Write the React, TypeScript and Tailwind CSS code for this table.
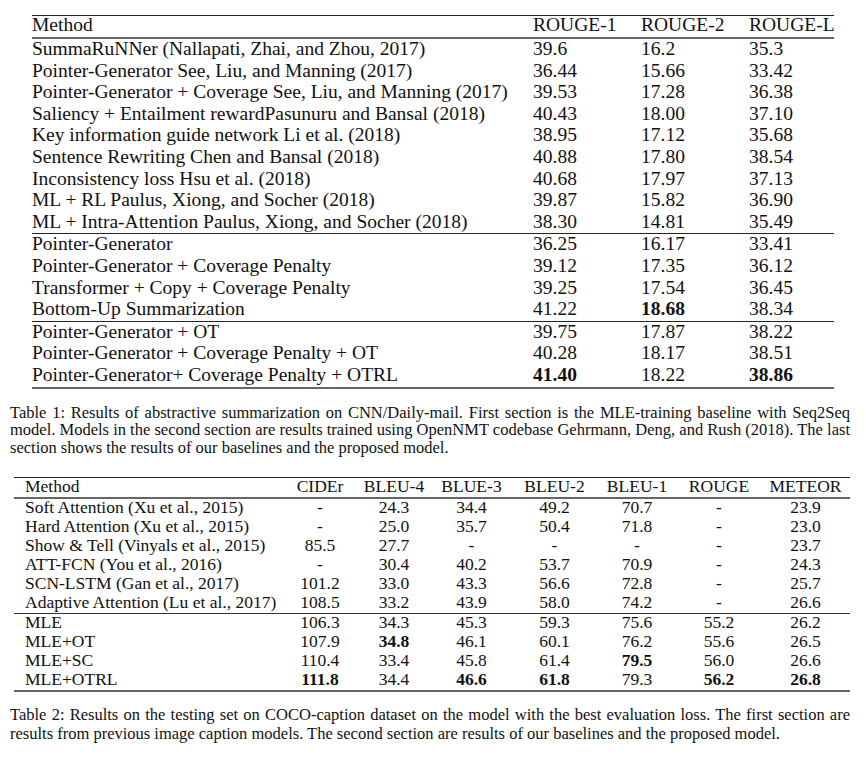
type Row = string[]

const t1Head = ["Method", "ROUGE-1", "ROUGE-2", "ROUGE-L"]

const t1Sections: Row[][] = [
  [
    ["SummaRuNNer (Nallapati, Zhai, and Zhou, 2017)", "39.6", "16.2", "35.3"],
    ["Pointer-Generator See, Liu, and Manning (2017)", "36.44", "15.66", "33.42"],
    ["Pointer-Generator + Coverage See, Liu, and Manning (2017)", "39.53", "17.28", "36.38"],
    ["Saliency + Entailment rewardPasunuru and Bansal (2018)", "40.43", "18.00", "37.10"],
    ["Key information guide network Li et al. (2018)", "38.95", "17.12", "35.68"],
    ["Sentence Rewriting Chen and Bansal (2018)", "40.88", "17.80", "38.54"],
    ["Inconsistency loss Hsu et al. (2018)", "40.68", "17.97", "37.13"],
    ["ML + RL Paulus, Xiong, and Socher (2018)", "39.87", "15.82", "36.90"],
    ["ML + Intra-Attention Paulus, Xiong, and Socher (2018)", "38.30", "14.81", "35.49"],
  ],
  [
    ["Pointer-Generator", "36.25", "16.17", "33.41"],
    ["Pointer-Generator + Coverage Penalty", "39.12", "17.35", "36.12"],
    ["Transformer + Copy + Coverage Penalty", "39.25", "17.54", "36.45"],
    ["Bottom-Up Summarization", "41.22", "*18.68", "38.34"],
  ],
  [
    ["Pointer-Generator + OT", "39.75", "17.87", "38.22"],
    ["Pointer-Generator + Coverage Penalty + OT", "40.28", "18.17", "38.51"],
    ["Pointer-Generator+ Coverage Penalty + OTRL", "*41.40", "18.22", "*38.86"],
  ],
]

const t2Head = ["Method", "CIDEr", "BLEU-4", "BLUE-3", "BLEU-2", "BLEU-1", "ROUGE", "METEOR"]

const t2Sections: Row[][] = [
  [
    ["Soft Attention (Xu et al., 2015)", "-", "24.3", "34.4", "49.2", "70.7", "-", "23.9"],
    ["Hard Attention (Xu et al., 2015)", "-", "25.0", "35.7", "50.4", "71.8", "-", "23.0"],
    ["Show & Tell (Vinyals et al., 2015)", "85.5", "27.7", "-", "-", "-", "-", "23.7"],
    ["ATT-FCN (You et al., 2016)", "-", "30.4", "40.2", "53.7", "70.9", "-", "24.3"],
    ["SCN-LSTM (Gan et al., 2017)", "101.2", "33.0", "43.3", "56.6", "72.8", "-", "25.7"],
    ["Adaptive Attention (Lu et al., 2017)", "108.5", "33.2", "43.9", "58.0", "74.2", "-", "26.6"],
  ],
  [
    ["MLE", "106.3", "34.3", "45.3", "59.3", "75.6", "55.2", "26.2"],
    ["MLE+OT", "107.9", "*34.8", "46.1", "60.1", "76.2", "55.6", "26.5"],
    ["MLE+SC", "110.4", "33.4", "45.8", "61.4", "*79.5", "56.0", "26.6"],
    ["MLE+OTRL", "*111.8", "34.4", "*46.6", "*61.8", "79.3", "*56.2", "*26.8"],
  ],
]

function Val({ v }: { v: string }) {
  if (v.startsWith("*")) return <span className="font-bold">{v.slice(1)}</span>
  return <>{v}</>
}

function JustLine({ children }: { children: string }) {
  return <div className="text-justify [text-align-last:justify] whitespace-nowrap">{children}</div>
}

export default function App() {
  return (
    <div className="w-[866px] h-[773px] bg-white text-[#111] font-['Liberation_Serif',serif] overflow-hidden pt-[15px]">
      {/* Table 1 */}
      <div className="ml-[32px] w-[802px] border-t border-[#222] text-[19.5px]">
        <div className="grid grid-cols-[501px_108px_108px_85px] h-[23px] leading-[18px] border-b-2 border-[#666]">
          {t1Head.map((h) => (
            <div key={h} className="whitespace-nowrap">{h}</div>
          ))}
        </div>
        {t1Sections.map((sec, i) => (
          <div
            key={i}
            className={i === t1Sections.length - 1 ? "border-b-2 border-[#666]" : "border-b border-[#222]"}
          >
            {sec.map((r) => (
              <div key={r[0]} className="grid grid-cols-[501px_108px_108px_85px] h-[21.6px] leading-[19px]">
                {r.map((c, j) => (
                  <div key={j} className="whitespace-nowrap">
                    <Val v={c} />
                  </div>
                ))}
              </div>
            ))}
          </div>
        ))}
      </div>

      {/* Caption 1 */}
      <div className="ml-[10px] w-[840px] mt-[15px] text-[16.5px] leading-[17.7px]">
        <JustLine>
          Table 1: Results of abstractive summarization on CNN/Daily-mail. First section is the MLE-training baseline with Seq2Seq
        </JustLine>
        <JustLine>
          model. Models in the second section are results trained using OpenNMT codebase Gehrmann, Deng, and Rush (2018). The last
        </JustLine>
        <div>section shows the results of our baselines and the proposed model.</div>
      </div>

      {/* Table 2 */}
      <div className="ml-[14px] w-[836px] mt-[20px] border-t border-[#222] text-[17.5px]">
        <div className="grid grid-cols-[269px_74px_74px_81px_85px_80px_84px_89px] h-[21px] leading-[17px] border-b-2 border-[#666]">
          {t2Head.map((h, j) => (
            <div key={h} className={j === 0 ? "pl-[11px] whitespace-nowrap" : "text-center whitespace-nowrap"}>
              {h}
            </div>
          ))}
        </div>
        {t2Sections.map((sec, i) => (
          <div
            key={i}
            className={i === t2Sections.length - 1 ? "border-b-2 border-[#666]" : "border-b border-[#333]"}
          >
            {sec.map((r) => (
              <div key={r[0]} className="grid grid-cols-[269px_74px_74px_81px_85px_80px_84px_89px] h-[19px] leading-[17px]">
                {r.map((c, j) => (
                  <div key={j} className={j === 0 ? "pl-[11px] whitespace-nowrap" : "text-center whitespace-nowrap"}>
                    <Val v={c} />
                  </div>
                ))}
              </div>
            ))}
          </div>
        ))}
      </div>

      {/* Caption 2 */}
      <div className="ml-[10px] w-[840px] mt-[13px] text-[16.5px] leading-[19px]">
        <JustLine>
          Table 2: Results on the testing set on COCO-caption dataset on the model with the best evaluation loss. The first section are
        </JustLine>
        <div>results from previous image caption models. The second section are results of our baselines and the proposed model.</div>
      </div>
    </div>
  )
}
